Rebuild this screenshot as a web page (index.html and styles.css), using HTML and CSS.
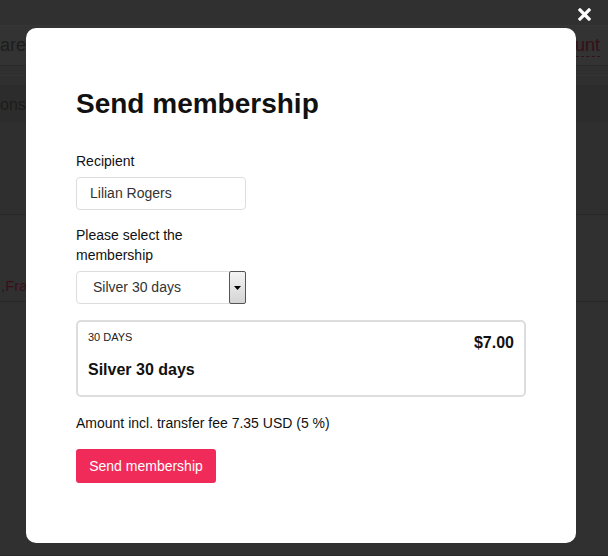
FILE: index.html
```html
<!DOCTYPE html>
<html>
<head>
<meta charset="utf-8">
<link rel="stylesheet" href="styles.css">
</head>
<body>
<div class="page">
  <div class="topbar"></div>
  <div class="subbar">
    <span class="muted">are a</span>
    <span class="acct">ount</span>
  </div>
  <div class="strip"></div>
  <div class="tabs"><span class="muted">ons</span></div>
  <div class="panel"></div>
  <div class="listrow"><span class="muted">, </span><span class="link">Fra</span></div>
  <div class="rest"></div>
</div>

<button class="close" aria-label="Close">
  <svg width="13" height="13" viewBox="0 0 13 13"><path d="M2 2 L11 11 M11 2 L2 11" stroke="#fff" stroke-width="3.2" stroke-linecap="square"/></svg>
</button>

<div class="modal">
  <h1 class="title">Send membership</h1>
  <label class="label">Recipient</label>
  <div class="input">Lilian Rogers</div>
  <label class="label label-wrap">Please select the membership</label>
  <div class="select">
    <span class="select-text">Silver 30 days</span>
    <span class="select-btn"><svg width="7" height="4" viewBox="0 0 7 4"><path d="M0 0 H7 L3.5 4 Z" fill="#000"/></svg></span>
  </div>
  <div class="card">
    <div class="card-head">
      <span class="card-days">30 DAYS</span>
      <span class="card-price">$7.00</span>
    </div>
    <div class="card-name">Silver 30 days</div>
  </div>
  <p class="amount">Amount incl. transfer fee 7.35 USD (5 %)</p>
  <button class="send">Send membership</button>
</div>
</body>
</html>
```
FILE: styles.css
```css
* { box-sizing: border-box; }
html, body { margin: 0; padding: 0; }
body {
  width: 608px;
  height: 556px;
  overflow: hidden;
  background: #2f2f2f;
  font-family: "Liberation Sans", Arial, sans-serif;
  position: relative;
}
.page { display: flex; flex-direction: column; height: 556px; }
.topbar { height: 26px; background: #303030; border-bottom: 1px solid #353535; }
.subbar {
  height: 40px;
  background: #333333;
  display: flex;
  justify-content: space-between;
  align-items: center;
  font-size: 18px;
  border-bottom: 1px solid #2a2a2a;
}
.muted { color: #1d1d1d; }
.subbar .muted { margin-left: 0; }
.acct {
  color: #33101a;
  margin-right: 8px;
  border-bottom: 1px dashed #33101a;
  line-height: 18px;
  padding-bottom: 2px;
  margin-top: 2px;
}
.strip { height: 10px; background: #303030; border-bottom: 1px solid #333; }
.tabs {
  height: 37px;
  background: #2c2c2c;
  display: flex;
  align-items: center;
  font-size: 16px;
  margin-top: 9px;
  padding-top: 3px;
}
.tabs .muted { margin-left: 0; }
.panel { height: 93px; background: #2f2f2f; border-bottom: 1px solid #282828; }
.listrow {
  height: 87px;
  background: #303030;
  border-bottom: 1px solid #282828;
  display: flex;
  align-items: flex-end;
  padding-bottom: 7px;
  font-size: 15px;
  padding-left: 1px;
}
.link { color: #3a0f1a; }
.rest { flex: 1; background: #303030; border-bottom: 1px solid #2a2a2a; }

.close {
  position: absolute;
  top: 8px;
  left: 578px;
  width: 14px;
  height: 14px;
  padding: 0;
  border: 0;
  background: none;
  display: flex;
}

.modal {
  position: absolute;
  top: 28px;
  left: 26px;
  width: 550px;
  height: 515px;
  background: #fff;
  border-radius: 10px;
  padding: 60px 50px 0;
  display: flex;
  flex-direction: column;
  align-items: flex-start;
  color: #111;
}
.title {
  margin: 0;
  font-size: 28px;
  font-weight: bold;
  line-height: 32px;
  color: #111;
}
.label {
  display: block;
  font-size: 14px;
  line-height: 20px;
  margin-top: 31px;
  color: #111;
}
.label-wrap { width: 140px; margin-top: 15px; }
.input {
  margin-top: 6px;
  width: 170px;
  height: 33px;
  border: 1px solid #ddd;
  border-radius: 4px;
  padding: 0 13px;
  font-size: 14px;
  line-height: 31px;
  color: #333;
}
.select {
  margin-top: 6px;
  width: 170px;
  height: 33px;
  border: 1px solid #ddd;
  border-radius: 4px;
  display: flex;
  align-items: stretch;
  font-size: 14px;
  color: #333;
}
.select-text { flex: 1; padding-left: 16px; line-height: 31px; }
.select-btn {
  width: 17px;
  margin: -1px -1px -1px 0;
  border: 1px solid #555;
  border-radius: 2px;
  background: linear-gradient(#f4f4f4, #e4e4e4 50%, #d4d4d4);
  display: flex;
  align-items: center;
  justify-content: center;
}
.card {
  margin-top: 16px;
  width: 450px;
  height: 77px;
  border: 2px solid #ddd;
  border-radius: 5px;
  padding: 8px 10px 0 10px;
}
.card-head { display: flex; justify-content: space-between; align-items: flex-start; }
.card-days { font-size: 11px; line-height: 14px; color: #222; }
.card-price { font-size: 16px; font-weight: bold; line-height: 20px; color: #111; margin-top: 3px; }
.card-name { margin-top: 7px; font-size: 16px; font-weight: bold; line-height: 20px; color: #111; }
.amount {
  margin: 16px 0 0;
  font-size: 14px;
  line-height: 20px;
  color: #111;
}
.send {
  margin-top: 16px;
  height: 34px;
  width: 140px;
  border: 0;
  border-radius: 3px;
  background: #f02b5a;
  color: #fff;
  font-family: "Liberation Sans", Arial, sans-serif;
  font-size: 14px;
  padding: 0;
}
```
